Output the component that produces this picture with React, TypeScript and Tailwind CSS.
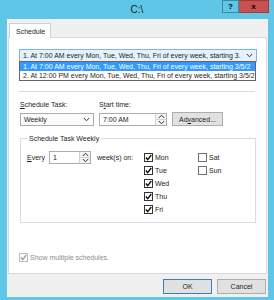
import type { ReactNode } from 'react';

const FONT = { fontFamily: '"Liberation Sans", Arial, sans-serif' };

function Chevron({ up = false }: { up?: boolean }): JSX.Element {
  return (
    <svg width="7" height="5" viewBox="0 0 7 5" className="block">
      <path
        d={up ? 'M0.8 4 L3.5 1.2 L6.2 4' : 'M0.8 1 L3.5 3.8 L6.2 1'}
        fill="none"
        stroke="#333"
        strokeWidth="1"
      />
    </svg>
  );
}

function Check({ color = '#111' }: { color?: string }): JSX.Element {
  return (
    <svg width="7" height="7" viewBox="0 0 7 7" className="block">
      <path d="M0.8 3.6 L2.7 5.6 L6.3 1" fill="none" stroke={color} strokeWidth="1.4" />
    </svg>
  );
}

function CheckBox({
  checked,
  label,
  disabled = false,
}: {
  checked: boolean;
  label: string;
  disabled?: boolean;
}): JSX.Element {
  return (
    <div className="flex h-[13px] items-center">
      <div
        className={`flex h-[9px] w-[9px] items-center justify-center border bg-white ${
          disabled ? 'border-[#bcbcbc]' : checked ? 'border-[#333]' : 'border-[#707070]'
        }`}
      >
        {checked && <Check color={disabled ? '#a0a0a0' : '#111'} />}
      </div>
      <span className={`ml-[2px] ${disabled ? 'text-[#8d8d8d]' : 'text-[#1e1e1e]'}`}>{label}</span>
    </div>
  );
}

function Spinner(): JSX.Element {
  return (
    <div className="flex w-[11px] flex-col border-l border-[#d4d4d4] bg-[#f4f4f4]">
      <div className="flex flex-1 items-center justify-center border-b border-[#d4d4d4]">
        <Chevron up />
      </div>
      <div className="flex flex-1 items-center justify-center">
        <Chevron />
      </div>
    </div>
  );
}

function Button({ children, primary = false, className = '' }: { children: ReactNode; primary?: boolean; className?: string }): JSX.Element {
  return (
    <div
      className={`flex items-center justify-center border bg-[#e1e1e1] text-[#1e1e1e] ${
        primary ? 'border-[#3c7fb1]' : 'border-[#adadad]'
      } ${className}`}
    >
      {children}
    </div>
  );
}

export default function App(): JSX.Element {
  return (
    <div style={FONT} className="flex h-[300px] w-[274px] flex-col bg-[#5fc6e7] text-[7px] leading-[9px]">
      {/* title bar */}
      <div className="relative flex h-[19px] items-center justify-center">
        <span className="text-[10px] text-[#1a1a1a]">C:\</span>
        <div className="absolute right-[5px] top-0 flex">
          <div className="flex h-[13px] w-[17px] items-center justify-center border border-[#3f8aa3] bg-[#5fc6e7] text-[8px] font-bold text-black">
            ?
          </div>
          <div className="flex h-[13px] w-[30px] items-center justify-center border border-l-0 border-[#9c3c3c] bg-[#c75050] text-[8px] font-bold text-black">
            x
          </div>
        </div>
      </div>

      {/* client area */}
      <div className="ml-[7px] flex h-[278px] w-[261px] flex-col bg-[#f0f0f0]">
        <div className="mt-[4px] ml-[2px] flex">
          <div className="-mb-px z-10 flex h-[15px] w-[42px] items-start border border-b-0 border-[#d0d0d0] bg-white pl-[6px] pt-[3px] text-[#1e1e1e]">
            Schedule
          </div>
        </div>
        <div className="ml-px flex h-[237px] w-[259px] flex-col border border-[#d9d9d9] bg-white pl-[10px] pt-[11px] text-[#1e1e1e]">
          {/* schedule combobox with open list */}
          <div className="relative h-[13px] w-[238px]">
            <div className="flex h-[13px] items-center justify-between border border-[#7eb4ea] bg-[#e5f1fb] pl-[3px] pr-[3px]">
              <span className="whitespace-nowrap">1. At 7:00 AM every Mon, Tue, Wed, Thu, Fri of every week, starting 3.</span>
              <Chevron />
            </div>
            <div className="absolute left-0 top-[12px] z-20 flex w-[237px] flex-col overflow-hidden border border-[#646464] bg-white">
              <div className="h-[9px] whitespace-nowrap bg-[#3399ff] pl-[3px] text-white">
                1. At 7:00 AM every Mon, Tue, Wed, Thu, Fri of every week, starting 3/5/2
              </div>
              <div className="h-[9px] whitespace-nowrap pl-[3px] text-[#1e1e1e]">
                2. At 12:00 PM every Mon, Tue, Wed, Thu, Fri of every week, starting 3/5/2
              </div>
            </div>
          </div>

          <div className="mt-[29px] h-px w-[236px] bg-[#dcdcdc]" />

          {/* labels */}
          <div className="mt-[8px] ml-[1px] flex">
            <span className="w-[79px]">
              <u>S</u>chedule Task:
            </span>
            <span>
              S<u>t</u>art time:
            </span>
          </div>

          {/* controls */}
          <div className="mt-[4px] ml-[1px] flex items-start">
            <div className="flex h-[13px] w-[74px] items-center justify-between border border-[#acacac] bg-[#fbfbfb] pl-[3px] pr-[3px]">
              <span>Weekly</span>
              <Chevron />
            </div>
            <div className="ml-[5px] flex h-[13px] w-[68px] border border-[#acacac] bg-white">
              <span className="flex flex-1 items-center pl-[3px]">7:00 AM</span>
              <Spinner />
            </div>
            <Button className="-mt-px ml-[5px] h-[14px] w-[51px]">
              Ad<u>v</u>anced...
            </Button>
          </div>

          {/* group box */}
          <div className="relative mt-[12px] ml-[1px] h-[85px] w-[236px] border border-[#dcdcdc] pl-[6px] pt-[12px]">
            <span className="absolute left-[6px] top-[-5px] bg-white px-[2px]">Schedule Task Weekly</span>
            <div className="flex items-start">
              <span className="flex h-[13px] w-[22px] items-center">
                <u>E</u>very
              </span>
              <div className="flex h-[13px] w-[42px] border border-[#acacac] bg-white">
                <span className="flex flex-1 items-center pl-[3px]">1</span>
                <Spinner />
              </div>
              <span className="ml-[6px] flex h-[13px] w-[47px] items-center">week(s) on:</span>
              <div className="flex w-[54px] flex-col">
                <CheckBox checked label="Mon" />
                <CheckBox checked label="Tue" />
                <CheckBox checked label="Wed" />
                <CheckBox checked label="Thu" />
                <CheckBox checked label="Fri" />
              </div>
              <div className="flex flex-col">
                <CheckBox checked={false} label="Sat" />
                <CheckBox checked={false} label="Sun" />
              </div>
            </div>
          </div>

          <div className="mt-[28px]">
            <CheckBox checked disabled label="Show multiple schedules." />
          </div>
        </div>

        {/* dialog buttons */}
        <div className="mt-[5px] mr-[2px] flex justify-end gap-[5px]">
          <Button primary className="h-[15px] w-[49px]">
            OK
          </Button>
          <Button className="h-[15px] w-[49px]">Cancel</Button>
        </div>
      </div>
    </div>
  );
}
